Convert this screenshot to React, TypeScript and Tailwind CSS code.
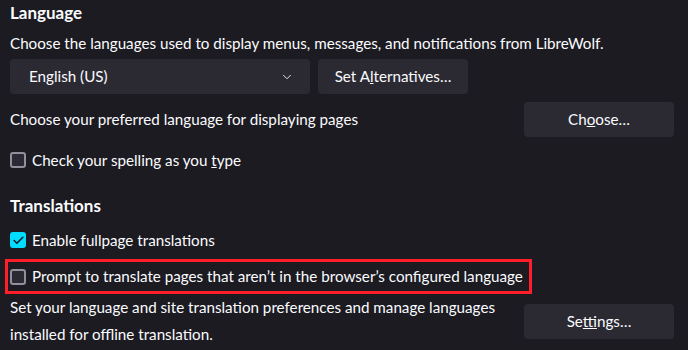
import { ChevronDown, Check } from "lucide-react";

function Btn({ children, className = "" }: { children: React.ReactNode; className?: string }) {
  return (
    <button
      className={`h-[35px] rounded-[4px] bg-[#2b2a33] text-[15.2px] text-[#fbfbfe] ${className}`}
    >
      {children}
    </button>
  );
}

function Box({ checked }: { checked?: boolean }) {
  return checked ? (
    <span className="flex h-[16px] w-[16px] shrink-0 items-center justify-center rounded-[3px] bg-[#00ddff]">
      <Check size={13} strokeWidth={3} color="#1c1b22" />
    </span>
  ) : (
    <span className="h-[16px] w-[16px] shrink-0 rounded-[3px] border-2 border-[#8f8f9d] bg-[#2b2a33]" />
  );
}

export default function App() {
  return (
    <div
      className="h-[350px] w-[688px] overflow-hidden whitespace-nowrap bg-[#1c1b22] pl-[10px] text-[15.2px] text-[#fbfbfe]"
      style={{ fontFamily: 'Lato, sans-serif' }}
    >
      <h1 className="text-[17px] font-bold leading-[26px]">Language</h1>
      <p className="mt-[4px] leading-[26px]">
        Choose the languages used to display menus, messages, and notifications from LibreWolf.
      </p>
      <div className="mt-[3px] flex gap-[8px]">
        <div className="flex h-[35px] w-[300px] items-center justify-between rounded-[4px] bg-[#2b2a33] pl-[19px] pr-[16px]">
          <span>English (US)</span>
          <ChevronDown size={14} strokeWidth={1.5} />
        </div>
        <Btn className="w-[150px]">
          Set A<u>l</u>ternatives…
        </Btn>
      </div>
      <div className="mt-[8px] flex items-center justify-between pr-[14px]">
        <span>Choose your preferred language for displaying pages</span>
        <Btn className="w-[150px]">
          Ch<u>o</u>ose…
        </Btn>
      </div>
      <label className="mt-[10px] flex h-[26px] items-center gap-[6px]">
        <Box />
        <span>
          Check your spelling as you <u>t</u>ype
        </span>
      </label>
      <h2 className="mt-[20px] text-[17px] font-bold leading-[26px]">Translations</h2>
      <label className="mt-[8px] flex h-[26px] items-center gap-[6px]">
        <Box checked />
        <span>Enable fullpage translations</span>
      </label>
      <div className="-ml-[5px] mt-[6px] w-[527px] border-[3px] border-[#ff1f28] pl-[2px]">
        <label className="flex h-[29px] items-center gap-[6px]">
          <Box />
          <span>Prompt to translate pages that aren’t in the browser’s configured language</span>
        </label>
      </div>
      <div className="flex items-center justify-between pr-[14px]">
        <p className="leading-[27px]">
          Set your language and site translation preferences and manage languages
          <br />
          installed for offline translation.
        </p>
        <Btn className="w-[150px]">
          Se<u>t</u>tings…
        </Btn>
      </div>
    </div>
  );
}
